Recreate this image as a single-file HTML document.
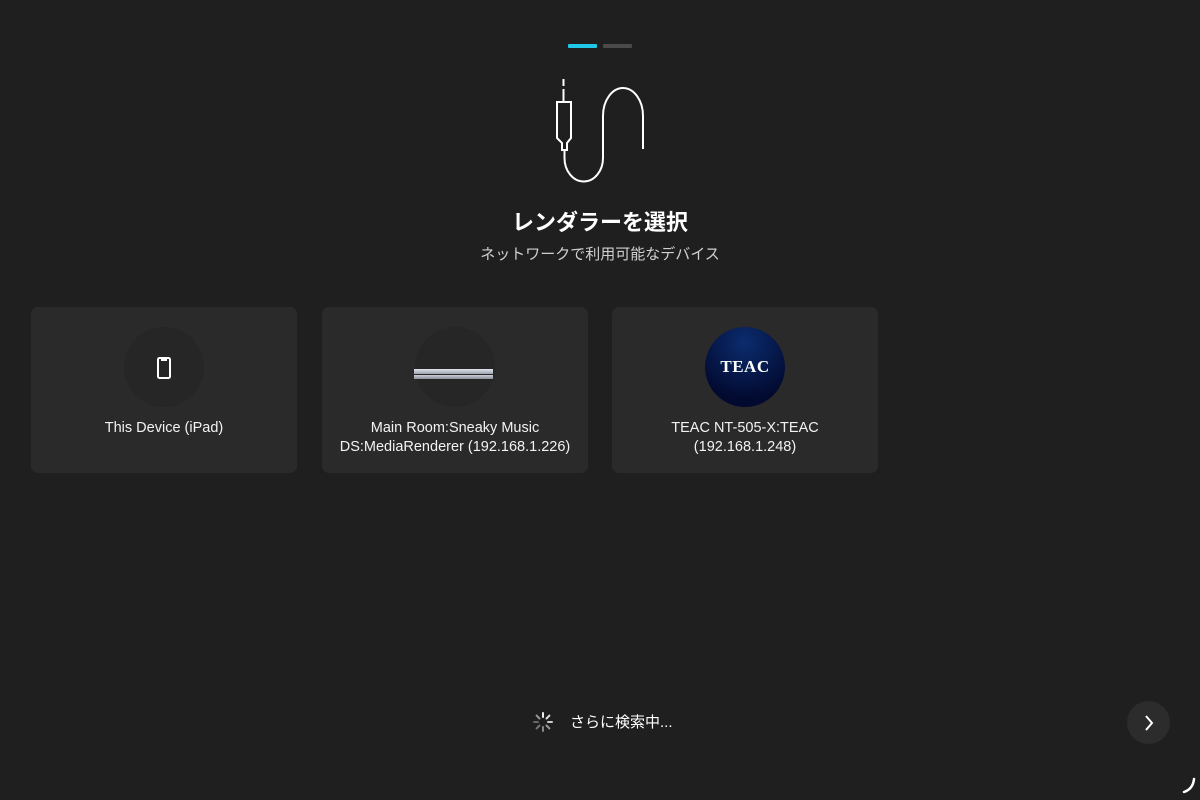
<!DOCTYPE html>
<html><head><meta charset="utf-8"><style>
html,body{margin:0;padding:0;width:1200px;height:800px;background:#1f1f1f;overflow:hidden;font-family:"Liberation Sans","Noto Sans CJK JP",sans-serif;color:#fff}
.abs{position:absolute}
.card{position:absolute;top:307px;width:266px;height:166px;background:#2a2a2a;border-radius:7px}
.circ{position:absolute;left:93px;top:20px;width:80px;height:80px;border-radius:50%;background:#262626}
.lbl{position:absolute;left:0;right:0;top:112px;text-align:center;font-size:14.5px;line-height:19px;color:#f2f2f2}
</style></head><body>
<div class="abs" style="left:568px;top:44px;width:29px;height:4px;background:#1ec8e6;border-radius:1px"></div>
<div class="abs" style="left:603px;top:44px;width:29px;height:4px;background:#4a4a4a;border-radius:1px"></div>
<svg class="abs" style="left:0;top:0" width="1200" height="200">
<g fill="none" stroke="#fff" stroke-width="2">
<path d="M563.5 79v7M563.5 89v13"/>
<path d="M557 102h14v36l-4 5v7h-5v-7l-5-5z"/>
<path d="M564.5 150v8a18 22 0 0 0 38.5 0V116a20 28 0 0 1 40 0v33"/>
</g></svg>
<div class="abs" style="left:0;width:1200px;top:208px;text-align:center;font-size:22px;font-weight:bold;line-height:30px">レンダラーを選択</div>
<div class="abs" style="left:0;width:1200px;top:245px;text-align:center;font-size:15px;line-height:20px;color:#d0d0d0">ネットワークで利用可能なデバイス</div>

<div class="card" style="left:31px"><div class="circ">
<div class="abs" style="left:33px;top:30px;width:14px;height:22px;border:2px solid #fff;border-radius:2.5px;box-sizing:border-box"></div>
<div class="abs" style="left:37px;top:32px;width:6px;height:2px;background:#fff"></div>
</div><div class="lbl">This Device (iPad)</div></div>

<div class="card" style="left:322px"><div class="circ">
<div class="abs" style="left:-1px;top:42px;width:79px;height:5px;background:linear-gradient(#e0e3ea,#9da3b0)"></div>
<div class="abs" style="left:-1px;top:48px;width:79px;height:4px;background:linear-gradient(#c9cdd6,#8a909c)"></div>
</div><div class="lbl">Main Room:Sneaky Music<br>DS:MediaRenderer (192.168.1.226)</div></div>

<div class="card" style="left:612px"><div class="circ" style="background:radial-gradient(circle at 50% 20%,#0b2c6e,#020a30 75%)">
<div class="abs" style="left:0;right:0;top:30px;text-align:center;font-family:'Liberation Serif',serif;font-weight:bold;font-size:17px;line-height:20px;letter-spacing:0.5px">TEAC</div>
</div><div class="lbl">TEAC NT-505-X:TEAC<br>(192.168.1.248)</div></div>

<svg class="abs" style="left:533px;top:712px" width="20" height="20">
<g stroke-width="2" stroke-linecap="round">
<line x1="10" y1="1" x2="10" y2="5" stroke="#eee"/>
<line x1="16.4" y1="3.6" x2="13.5" y2="6.5" stroke="#ddd"/>
<line x1="19" y1="10" x2="15" y2="10" stroke="#ccc"/>
<line x1="16.4" y1="16.4" x2="13.5" y2="13.5" stroke="#999"/>
<line x1="10" y1="19" x2="10" y2="15" stroke="#888"/>
<line x1="3.6" y1="16.4" x2="6.5" y2="13.5" stroke="#777"/>
<line x1="1" y1="10" x2="5" y2="10" stroke="#666"/>
<line x1="3.6" y1="3.6" x2="6.5" y2="6.5" stroke="#999"/>
</g></svg>
<div class="abs" style="left:570px;top:712px;font-size:15px;line-height:22px">さらに検索中...</div>

<div class="abs" style="left:1127px;top:701px;width:43px;height:43px;border-radius:50%;background:#2c2c2c"></div>
<svg class="abs" style="left:1127px;top:701px" width="43" height="43"><path d="M19 15l6 7-6 7" fill="none" stroke="#fff" stroke-width="2"/></svg>
<svg class="abs" style="left:1178px;top:776px" width="20" height="20"><path d="M16 3q-1 10-10 13" fill="none" stroke="#fff" stroke-width="2.5" stroke-linecap="round"/></svg>
</body></html>
